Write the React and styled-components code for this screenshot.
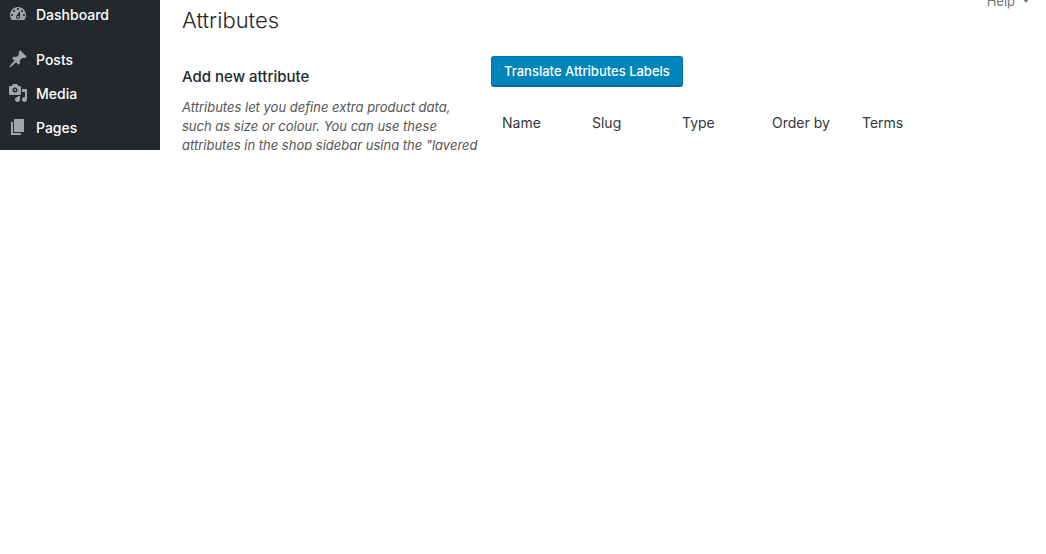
import React from "react";
import styled, { createGlobalStyle } from "styled-components";

const GlobalStyle = createGlobalStyle`
  * { box-sizing: border-box; }
  body {
    margin: 0;
    background: #fff;
    color: #444;
    font-family: Inter, "Liberation Sans", sans-serif;
    font-size: 13px;
    line-height: 19px;
  }
`;

const Shell = styled.div`
  display: flex;
  max-height: 150px;
  overflow: hidden;
`;

const Sidebar = styled.nav`
  flex: 0 0 160px;
  margin-top: -3px;
  background: #23282d;
`;

const Menu = styled.ul`
  margin: 0;
  padding: 0 0 8px;
  list-style: none;
`;

const MenuItem = styled.li`
  margin-bottom: ${(p) => (p.$separated ? "11px" : "0")};
`;

const MenuLink = styled.a`
  display: flex;
  align-items: center;
  gap: 8px;
  height: 34px;
  padding: 0 8px;
  color: #fff;
  font-size: 14px;
  font-weight: 500;
  text-decoration: none;
`;

const MenuIcon = styled.svg`
  width: 20px;
  height: 20px;
  fill: #a0a5aa;
`;

const Main = styled.main`
  flex: 1;
  min-width: 0;
  padding: 0 17px 0 22px;
`;

const TopBar = styled.header`
  display: flex;
  align-items: flex-start;
  justify-content: space-between;
  height: 56px;
`;

const Title = styled.h1`
  margin: 5px 0 0;
  color: #23282d;
  font-size: 22px;
  font-weight: 300;
  line-height: 30px;
`;

const HelpButton = styled.button`
  display: flex;
  align-items: center;
  gap: 8px;
  margin-top: -8px;
  padding: 0;
  border: 0;
  background: none;
  color: #72777c;
  font: inherit;
  line-height: 18px;
`;

const Caret = styled.span`
  border: 3px solid transparent;
  border-top: 4px solid #72777c;
  border-bottom: 0;
`;

const Columns = styled.div`
  display: flex;
  gap: 9px;
`;

const FormColumn = styled.section`
  flex: 0 0 300px;
`;

const FormTitle = styled.h2`
  margin: 11px 0;
  color: #23282d;
  font-size: 15px;
  font-weight: 500;
  line-height: 20px;
`;

const Description = styled.p`
  margin: 0;
  color: #555;
  font-style: italic;
`;

const ListColumn = styled.section`
  flex: 1;
  min-width: 0;
`;

const PrimaryButton = styled.button`
  display: block;
  height: 31px;
  padding: 0 12px;
  border: 1px solid #0073aa;
  border-bottom: 2px solid #006799;
  border-radius: 3px;
  background: #0085ba;
  color: #fff;
  font: inherit;
  font-weight: 500;
`;

const Table = styled.table`
  width: 450px;
  max-width: 100%;
  margin-top: 16px;
  border-collapse: collapse;
  table-layout: fixed;
`;

const HeadCell = styled.th`
  padding: 10px 0 10px 11px;
  color: #32373c;
  font-size: 14px;
  font-weight: 400;
  line-height: 20px;
  text-align: left;
  white-space: nowrap;
`;

const menu = [
  {
    label: "Dashboard",
    separated: true,
    path: "M3.76 16h12.48c1.1-1.37 1.76-3.11 1.76-5 0-4.42-3.58-8-8-8s-8 3.58-8 8c0 1.89.66 3.63 1.76 5zM10 4c.55 0 1 .45 1 1s-.45 1-1 1-1-.45-1-1 .45-1 1-1zM6 6c.55 0 1 .45 1 1s-.45 1-1 1-1-.45-1-1 .45-1 1-1zm8 0c.55 0 1 .45 1 1s-.45 1-1 1-1-.45-1-1 .45-1 1-1zm-5.37 5.55L12 7v6c0 1.1-.9 2-2 2s-2-.9-2-2c0-.57.24-1.08.63-1.45zM4 10c.55 0 1 .45 1 1s-.45 1-1 1-1-.45-1-1 .45-1 1-1zm12 0c.55 0 1 .45 1 1s-.45 1-1 1-1-.45-1-1 .45-1 1-1zm-5 3c0-.55-.45-1-1-1s-1 .45-1 1 .45 1 1 1 1-.45 1-1z",
  },
  {
    label: "Posts",
    path: "M10.44 3.02l1.82-1.82 6.36 6.35-1.83 1.82c-1.05-.68-2.48-.57-3.41.36l-.75.75c-.92.93-1.04 2.35-.35 3.41l-1.83 1.82-2.41-2.41-2.8 2.79c-.42.42-3.38 2.71-3.8 2.29s1.86-3.39 2.28-3.81l2.79-2.79L4.1 9.36l1.83-1.82c1.05.69 2.48.57 3.4-.36l.75-.75c.93-.92 1.05-2.35.36-3.41z",
  },
  {
    label: "Media",
    path: "M13 11V4c0-.55-.45-1-1-1h-1.67L9 1H5L3.67 3H2c-.55 0-1 .45-1 1v7c0 .55.45 1 1 1h10c.55 0 1-.45 1-1zM7 4.5c1.38 0 2.5 1.12 2.5 2.5S8.38 9.5 7 9.5 4.5 8.38 4.5 7 5.62 4.5 7 4.5zM7 6a1 1 0 1 0 0 2a1 1 0 0 0 0-2zM14 6h5v10.5c0 1.38-1.12 2.5-2.5 2.5S14 17.88 14 16.5s1.12-2.5 2.5-2.5c.17 0 .34.02.5.05V9h-3V6zm-4 8.05V13h2v3.5c0 1.38-1.12 2.5-2.5 2.5S7 17.88 7 16.5 8.12 14 9.5 14c.17 0 .34.02.5.05z",
  },
  {
    label: "Pages",
    path: "M6 15V2h10v13H6zm-1 1h8v2H3V5h2v11z",
  },
];

const headings = ["Name", "Slug", "Type", "Order by", "Terms"];

export default function App() {
  return (
    <>
      <GlobalStyle />
      <Shell>
        <Sidebar>
          <Menu>
            {menu.map((item) => (
              <MenuItem key={item.label} $separated={item.separated}>
                <MenuLink href="#">
                  <MenuIcon viewBox="0 0 20 20" aria-hidden="true">
                    <path fillRule="evenodd" d={item.path} />
                  </MenuIcon>
                  {item.label}
                </MenuLink>
              </MenuItem>
            ))}
          </Menu>
        </Sidebar>
        <Main>
          <TopBar>
            <Title>Attributes</Title>
            <HelpButton type="button">
              Help
              <Caret />
            </HelpButton>
          </TopBar>
          <Columns>
            <FormColumn>
              <FormTitle>Add new attribute</FormTitle>
              <Description>
                Attributes let you define extra product data, such as size or
                colour. You can use these attributes in the shop sidebar using
                the "layered
              </Description>
            </FormColumn>
            <ListColumn>
              <PrimaryButton type="button">
                Translate Attributes Labels
              </PrimaryButton>
              <Table>
                <thead>
                  <tr>
                    {headings.map((heading) => (
                      <HeadCell key={heading} scope="col">
                        {heading}
                      </HeadCell>
                    ))}
                  </tr>
                </thead>
              </Table>
            </ListColumn>
          </Columns>
        </Main>
      </Shell>
    </>
  );
}
